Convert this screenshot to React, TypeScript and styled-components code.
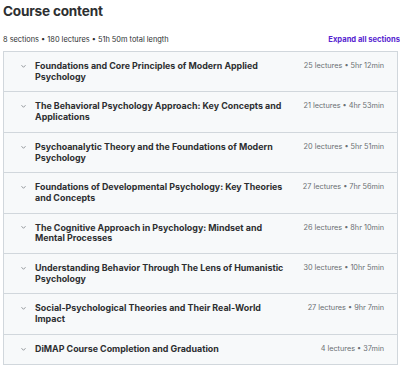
import styled, { createGlobalStyle } from "styled-components";

const GlobalStyle = createGlobalStyle`
  html, body {
    margin: 0;
    padding: 0;
    background: #ffffff;
  }
  body {
    font-family: Inter, "Noto Sans", sans-serif;
    color: #2d2f31;
  }
`;

const Wrapper = styled.section`
  width: 397px;
  padding-left: 3px;
`;

const Title = styled.h2`
  margin: 0;
  padding-top: 2px;
  font-size: 13.6px;
  line-height: 18px;
  font-weight: 700;
  letter-spacing: -0.2px;
  color: #2d2f31;
`;

const SubHeader = styled.div`
  display: flex;
  justify-content: space-between;
  align-items: center;
  margin-top: 13px;
  height: 12px;
  font-size: 7.4px;
`;

const Stats = styled.span`
  color: #2d2f31;
`;

const ExpandLink = styled.span`
  font-weight: 700;
  font-size: 7.6px;
  color: #5624d0;
  cursor: pointer;
`;

const Box = styled.div`
  margin-top: 6px;
  width: 393px;
  border: 1px solid #d1d7dc;
  border-bottom: none;
`;

const Row = styled.div`
  display: flex;
  align-items: flex-start;
  padding: 9px 13px 9px 15px;
  background: #f7f9fa;
  border-bottom: 1px solid #d1d7dc;
  cursor: pointer;
`;

const Chevron = styled.span`
  display: flex;
  align-items: center;
  justify-content: center;
  width: 8px;
  height: 10.7px;
  margin-right: 8px;
  color: #8a8f93;
`;

const SectionTitle = styled.div`
  flex: 1;
  max-width: 256px;
  font-size: 8.9px;
  line-height: 10.7px;
  font-weight: 700;
  color: #2d2f31;
`;

const Meta = styled.div`
  margin-left: auto;
  font-size: 7.3px;
  line-height: 10.7px;
  color: #6a6f73;
  white-space: nowrap;
`;

const sections = [
  { title: "Foundations and Core Principles of Modern Applied Psychology", lectures: 25, length: "5hr 12min" },
  { title: "The Behavioral Psychology Approach: Key Concepts and Applications", lectures: 21, length: "4hr 53min" },
  { title: "Psychoanalytic Theory and the Foundations of Modern Psychology", lectures: 20, length: "5hr 51min" },
  { title: "Foundations of Developmental Psychology: Key Theories and Concepts", lectures: 27, length: "7hr 56min" },
  { title: "The Cognitive Approach in Psychology: Mindset and Mental Processes", lectures: 26, length: "8hr 10min" },
  { title: "Understanding Behavior Through The Lens of Humanistic Psychology", lectures: 30, length: "10hr 5min" },
  { title: "Social-Psychological Theories and Their Real-World Impact", lectures: 27, length: "9hr 7min" },
  { title: "DiMAP Course Completion and Graduation", lectures: 4, length: "37min" },
];

const ChevronIcon = () => (
  <svg width="7" height="5" viewBox="0 0 7 5" fill="none">
    <polyline points="1.5,1.2 3.5,3.3 5.5,1.2" stroke="currentColor" strokeWidth="0.9" />
  </svg>
);

const App = () => {
  return (
    <Wrapper>
      <GlobalStyle />
      <Title>Course content</Title>
      <SubHeader>
        <Stats>8 sections • 180 lectures • 51h 50m total length</Stats>
        <ExpandLink>Expand all sections</ExpandLink>
      </SubHeader>
      <Box>
        {sections.map((s, i) => (
          <Row key={i}>
            <Chevron>
              <ChevronIcon />
            </Chevron>
            <SectionTitle>{s.title}</SectionTitle>
            <Meta>
              {s.lectures} lectures • {s.length}
            </Meta>
          </Row>
        ))}
      </Box>
    </Wrapper>
  );
};

export default App;
